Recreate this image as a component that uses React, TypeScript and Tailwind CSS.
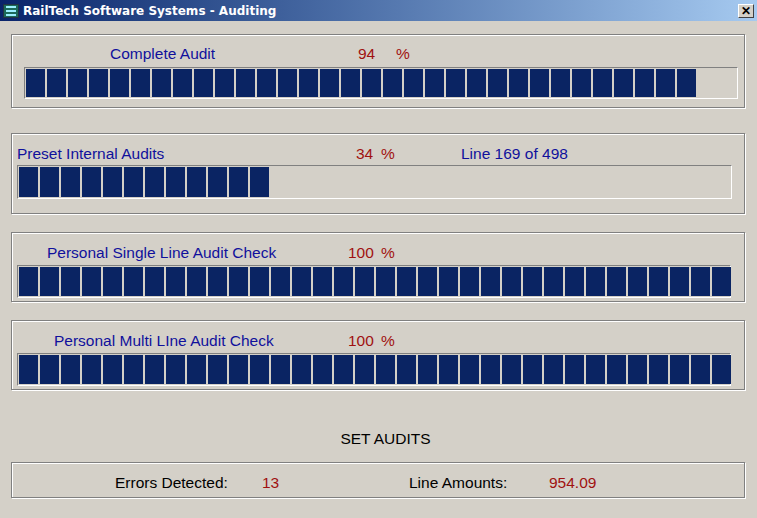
import React from "react";

const blue = "text-[#10109c]";
const red = "text-[#a01010]";

function Bar({ n, w, h }: { n: number; w: number; h: number }) {
  return (
    <div
      className="border border-t-[#808080] border-l-[#808080] border-b-white border-r-white bg-[#d4d0c8] p-[1px] flex gap-[2px]"
      style={{ width: w, height: h }}
    >
      {Array.from({ length: n }).map((_, i) => (
        <div key={i} className="w-[19px] h-full bg-[#0a2463] shrink-0" />
      ))}
    </div>
  );
}

function Group({ children, h, mt }: { children: React.ReactNode; h: number; mt: number }) {
  return (
    <div
      className="mx-[11px] border border-[#808080] shadow-[inset_1px_1px_0_#fff,1px_1px_0_#fff] relative"
      style={{ height: h, marginTop: mt, width: 734 }}
    >
      {children}
    </div>
  );
}

export default function App() {
  return (
    <div
      className="w-[757px] h-[518px] bg-[#d4d0c8] overflow-hidden text-[15.5px] leading-none"
      style={{ fontFamily: '"Liberation Sans", Arial, sans-serif' }}
    >
      <div className="h-[21px] flex items-center bg-gradient-to-r from-[#0a246a] to-[#a6caf0] px-[3px]">
        <div className="w-[16px] h-[14px] bg-[#1b6a5a] border border-[#234] flex flex-col justify-center gap-[2px] px-[2px]">
          <div className="h-[2px] bg-[#9ef]" />
          <div className="h-[2px] bg-[#9ef]" />
          <div className="h-[2px] bg-[#9ef]" />
        </div>
        <span className="ml-[4px] text-white font-bold text-[12px]" style={{ fontFamily: '"DejaVu Sans", sans-serif' }}>
          RailTech Software Systems - Auditing
        </span>
        <div className="ml-auto w-[16px] h-[14px] bg-[#d4d0c8] border border-t-white border-l-white border-b-[#404040] border-r-[#404040] flex items-center justify-center text-[12px] font-bold text-black">
          ✕
        </div>
      </div>

      <Group h={74} mt={13}>
        <div className="flex mt-[11px] h-[16px]">
          <span className={`${blue} ml-[98px] w-[248px]`}>Complete Audit</span>
          <span className={`${red} w-[38px]`}>94</span>
          <span className={red}>%</span>
        </div>
        <div className="ml-[12px] mt-[5px]">
          <Bar n={32} w={714} h={32} />
        </div>
      </Group>

      <Group h={81} mt={25}>
        <div className="flex mt-[12px] h-[16px]">
          <span className={`${blue} ml-[5px] w-[339px]`}>Preset Internal Audits</span>
          <span className={`${red} w-[25px]`}>34</span>
          <span className={`${red} w-[80px]`}>%</span>
          <span className={blue}>Line 169 of 498</span>
        </div>
        <div className="ml-[5px] mt-[3px]">
          <Bar n={12} w={715} h={34} />
        </div>
      </Group>

      <Group h={70} mt={18}>
        <div className="flex mt-[12px] h-[16px]">
          <span className={`${blue} ml-[35px] w-[301px]`}>Personal Single Line Audit Check</span>
          <span className={`${red} w-[33px]`}>100</span>
          <span className={red}>%</span>
        </div>
        <div className="ml-[5px] mt-[4px]">
          <Bar n={34} w={714} h={33} />
        </div>
      </Group>

      <Group h={70} mt={18}>
        <div className="flex mt-[12px] h-[16px]">
          <span className={`${blue} ml-[42px] w-[294px]`}>Personal Multi LIne Audit Check</span>
          <span className={`${red} w-[33px]`}>100</span>
          <span className={red}>%</span>
        </div>
        <div className="ml-[5px] mt-[4px]">
          <Bar n={34} w={714} h={33} />
        </div>
      </Group>

      <div className="mt-[41px] h-[16px] text-center text-black pl-[14px]">SET AUDITS</div>

      <Group h={36} mt={15}>
        <div className="flex mt-[12px] h-[16px]">
          <span className="text-black ml-[103px] w-[147px]">Errors Detected:</span>
          <span className={`${red} w-[147px]`}>13</span>
          <span className="text-black w-[140px]">Line Amounts:</span>
          <span className={red}>954.09</span>
        </div>
      </Group>
    </div>
  );
}
